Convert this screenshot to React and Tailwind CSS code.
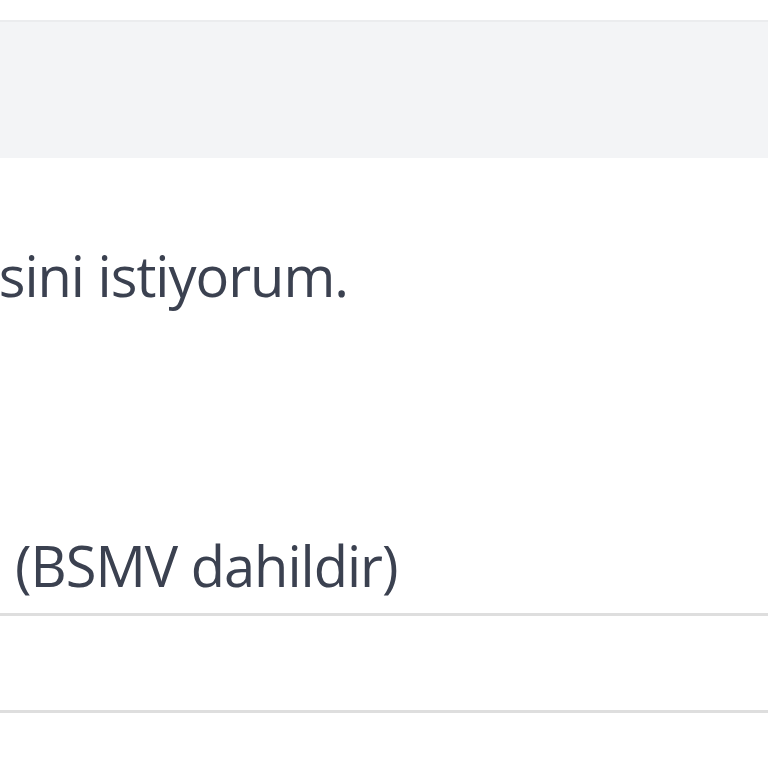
export default function App() {
  return (
    <div className="w-[768px] h-[768px] overflow-hidden bg-white" style={{ fontFamily: '"Open Sans", sans-serif' }}>
      <div className="h-[20px]" />
      <div className="h-[138px] bg-[#f3f4f6] border-t-2 border-[#ebecee]" />
      <div className="h-[79px]" />
      <div className="w-[348px] flex justify-end overflow-hidden whitespace-nowrap text-[56px] leading-[76px] tracking-[-1px] text-[#3b4150]">
        <span>ödemesini istiyorum.</span>
      </div>
      <div className="h-[214px]" />
      <div className="pl-[15px] whitespace-nowrap text-[56px] leading-[76px] tracking-[-1px] text-[#3b4150]">(BSMV dahildir)</div>
      <div className="h-[10px]" />
      <div className="h-[100px] border-t-[3px] border-b-[3px] border-[#dedede]" />
    </div>
  );
}
